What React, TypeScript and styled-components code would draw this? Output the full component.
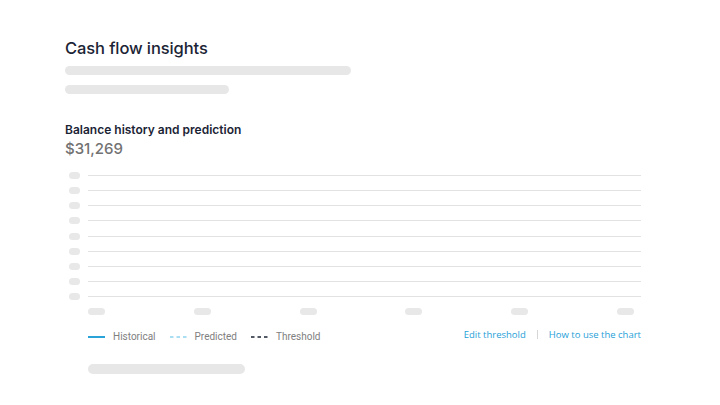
import React from "react";
import styled, { createGlobalStyle } from "styled-components";

const Global = createGlobalStyle`
  html, body { margin: 0; padding: 0; background: #ffffff; }
  body { font-family: Inter, "Noto Sans", "Liberation Sans", sans-serif; }
`;

const Page = styled.div`
  width: 720px;
  height: 405px;
  box-sizing: border-box;
  padding: 37px 0 0 65px;
  display: flex;
  flex-direction: column;
`;

const Content = styled.div`
  width: 576px;
  display: flex;
  flex-direction: column;
`;

const Title = styled.h1`
  margin: 0;
  font-size: 16.5px;
  line-height: 22px;
  font-weight: 500;
  color: #1b2435;
  letter-spacing: -0.1px;
`;

const Skeleton = styled.div<{ $w: number; $h: number; $mt: number; $ml?: number }>`
  width: ${(p) => p.$w}px;
  height: ${(p) => p.$h}px;
  margin-top: ${(p) => p.$mt}px;
  margin-left: ${(p) => p.$ml ?? 0}px;
  border-radius: ${(p) => p.$h / 2}px;
  background: #e7e7e7;
`;

const Subtitle = styled.h2`
  margin: 28px 0 0;
  font-size: 12px;
  line-height: 16px;
  font-weight: 600;
  color: #1b2435;
`;

const Amount = styled.div`
  margin-top: 1px;
  font-size: 15px;
  line-height: 20px;
  font-weight: 500;
  color: #727272;
`;

const Chart = styled.div`
  margin-top: 9px;
  display: grid;
  grid-template-columns: 23px 1fr;
`;

const Row = styled.div`
  display: contents;
`;

const YCell = styled.div`
  height: 15.125px;
  display: flex;
  align-items: center;
  padding-left: 4px;
`;

const Pill = styled.div<{ $w: number }>`
  width: ${(p) => p.$w}px;
  height: 7px;
  border-radius: 4px;
  background: #e8e8e8;
`;

const LineCell = styled.div`
  height: 15.125px;
  display: flex;
  align-items: center;
`;

const GridLine = styled.div`
  width: 100%;
  height: 1px;
  background: #e2e2e2;
`;

const XAxis = styled.div`
  grid-column: 2;
  display: flex;
  justify-content: space-between;
  padding-right: 7px;
  margin-top: 4px;
`;

const Footer = styled.div`
  margin-top: 12px;
  margin-left: 23px;
  display: flex;
  justify-content: space-between;
  align-items: center;
`;

const Legend = styled.div`
  display: flex;
  align-items: center;
  gap: 14px;
  margin-top: 4px;
`;

const LegendItem = styled.div`
  display: flex;
  align-items: center;
  gap: 8px;
  font-size: 10px;
  color: #808080;
  font-family: Roboto, "Liberation Sans", sans-serif;
`;

const Swatch = styled.svg`
  display: block;
`;

const Links = styled.div`
  display: flex;
  align-items: center;
  gap: 11px;
  font-size: 9.5px;
  font-weight: 500;
  font-family: "Open Sans", "Liberation Sans", sans-serif;
`;

const LinkText = styled.a`
  color: #1f9fd8;
  text-decoration: none;
  cursor: pointer;
`;

const Divider = styled.span`
  width: 1px;
  height: 9px;
  background: #d6d6d6;
`;

const ROWS = 9;
const XPILLS = 6;

export default function App() {
  return (
    <>
      <Global />
      <Page>
        <Content>
          <Title>Cash flow insights</Title>
          <Skeleton $w={286} $h={9} $mt={7} />
          <Skeleton $w={164} $h={9} $mt={10} />
          <Subtitle>Balance history and prediction</Subtitle>
          <Amount>$31,269</Amount>
          <Chart>
            {Array.from({ length: ROWS }).map((_, i) => (
              <Row key={i}>
                <YCell>
                  <Pill $w={11} />
                </YCell>
                <LineCell>
                  <GridLine />
                </LineCell>
              </Row>
            ))}
            <XAxis>
              {Array.from({ length: XPILLS }).map((_, i) => (
                <Pill key={i} $w={17} />
              ))}
            </XAxis>
          </Chart>
          <Footer>
            <Legend>
              <LegendItem>
                <Swatch width="17" height="2">
                  <line x1="0" y1="1" x2="17" y2="1" stroke="#2aa3d8" strokeWidth="2" />
                </Swatch>
                Historical
              </LegendItem>
              <LegendItem>
                <Swatch width="17" height="2">
                  <line x1="0" y1="1" x2="17" y2="1" stroke="#8fd3ee" strokeWidth="1.5" strokeDasharray="3.5 3" />
                </Swatch>
                Predicted
              </LegendItem>
              <LegendItem>
                <Swatch width="17" height="2">
                  <line x1="0" y1="1" x2="17" y2="1" stroke="#1b2435" strokeWidth="1.5" strokeDasharray="3.5 3" />
                </Swatch>
                Threshold
              </LegendItem>
            </Legend>
            <Links>
              <LinkText>Edit threshold</LinkText>
              <Divider />
              <LinkText>How to use the chart</LinkText>
            </Links>
          </Footer>
          <Skeleton $w={157} $h={10} $mt={22} $ml={23} />
        </Content>
      </Page>
    </>
  );
}
